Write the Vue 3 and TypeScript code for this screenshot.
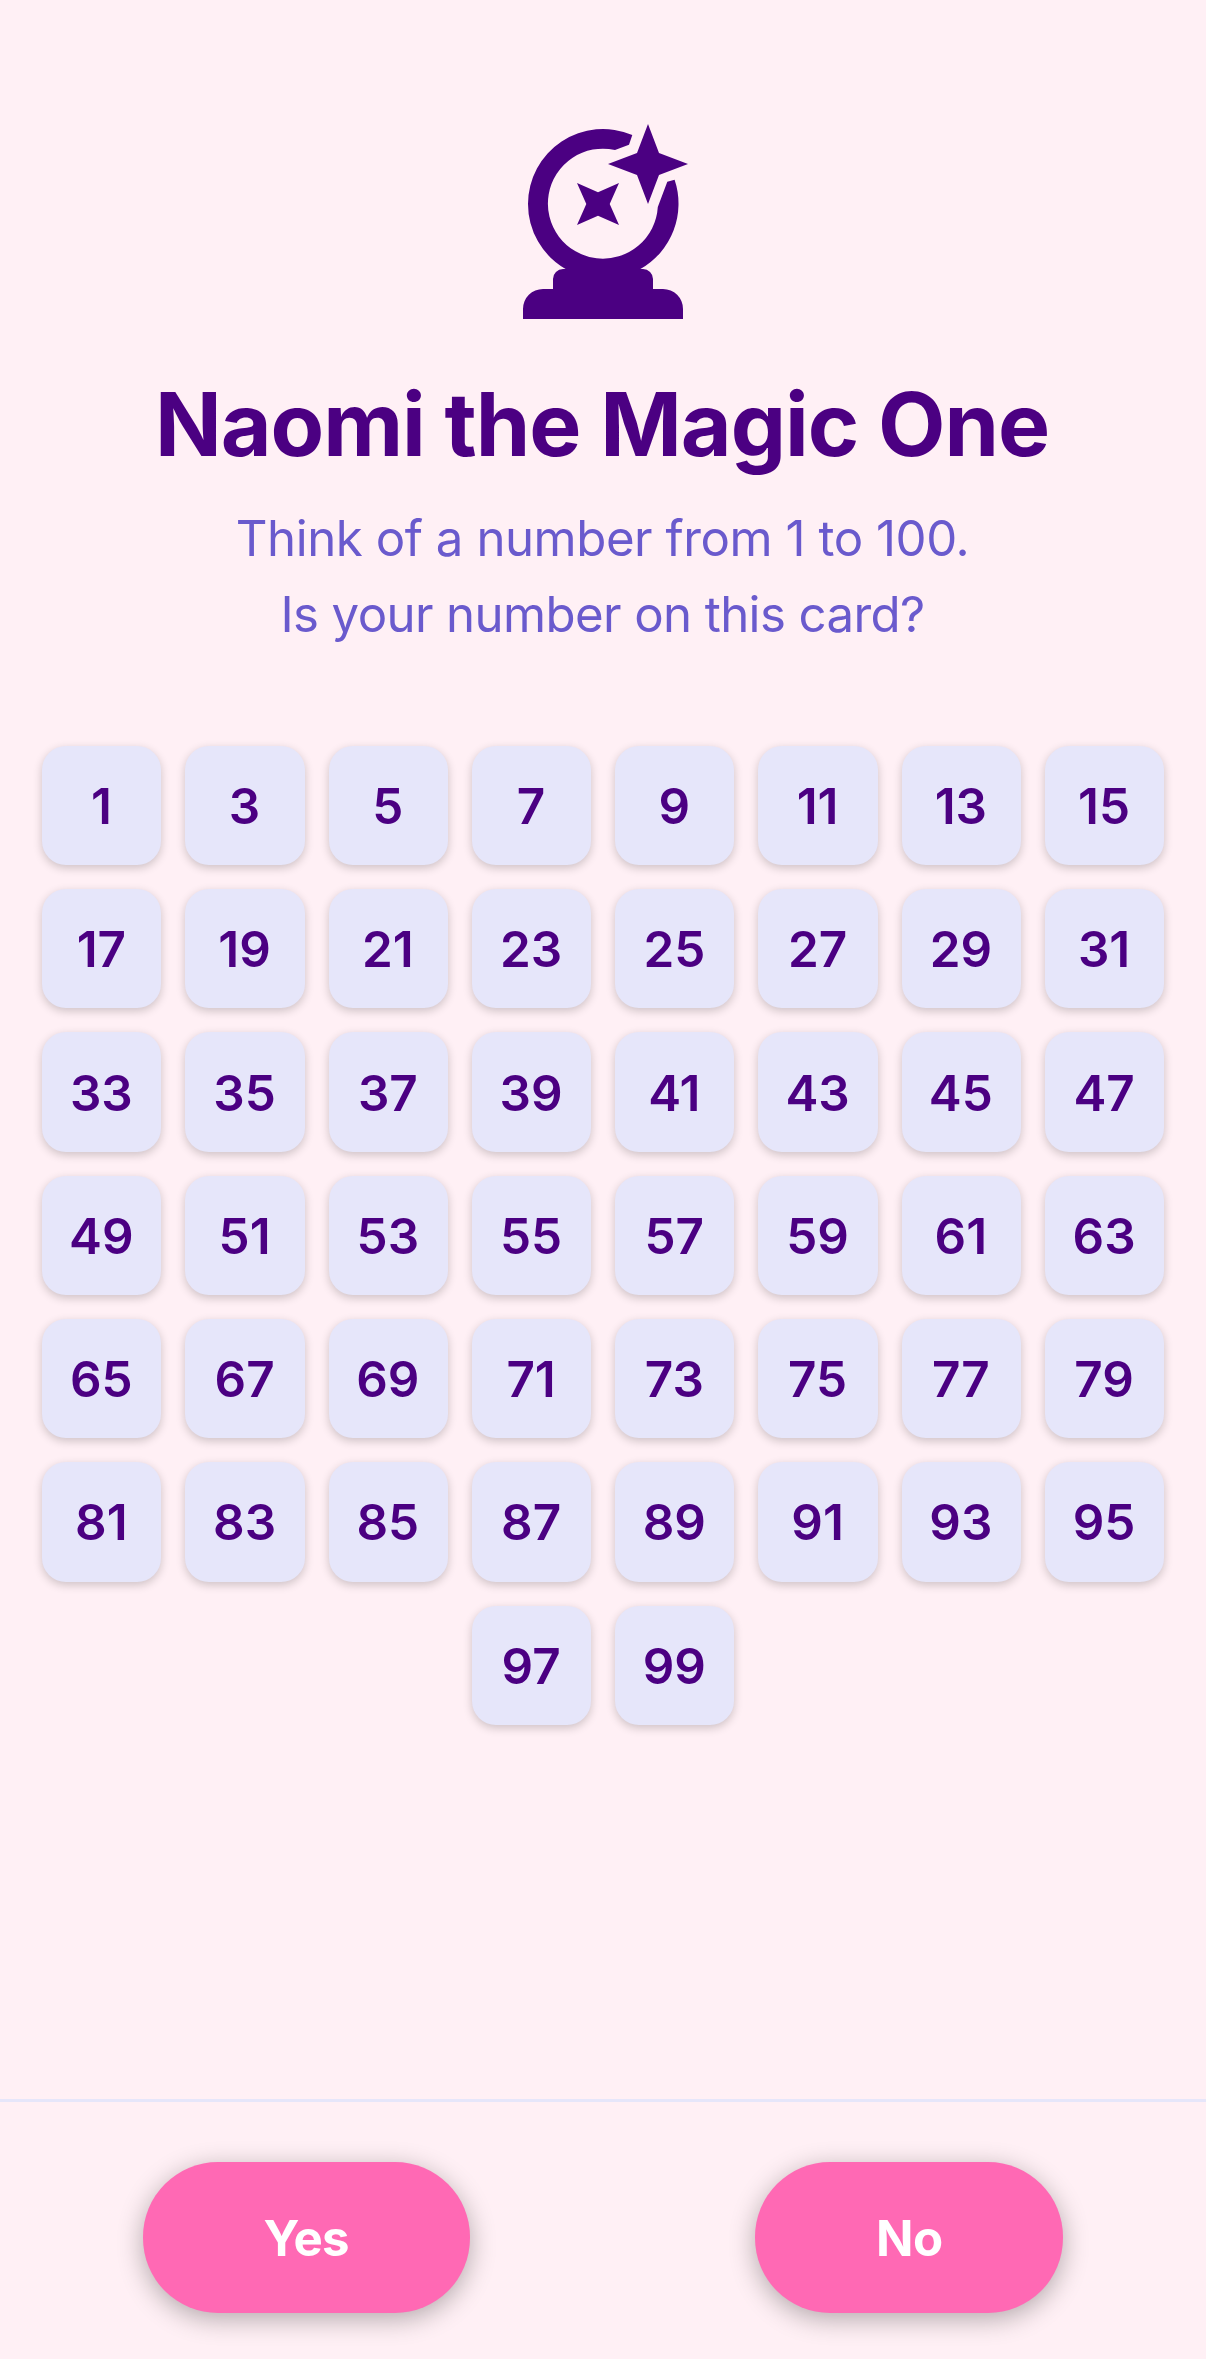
<script setup lang="ts">
const numbers: number[] = Array.from({ length: 50 }, (_, i) => i * 2 + 1)
</script>

<template>
  <div class="screen">
    <main class="content">
      <svg class="ball" viewBox="0 0 24 24" fill="currentColor" aria-hidden="true">
        <path d="M14.93 3.6A7.5 7.5 0 0 0 4.5 10.5A7.5 7.5 0 0 0 8.26 17H8A1 1 0 0 0 7 18V19H6A2 2 0 0 0 4 21V22H20V21A2 2 0 0 0 18 19H17V18A1 1 0 0 0 16 17H15.74A7.5 7.5 0 0 0 19.16 8.08L18.43 8.28L17.48 10.8A5.5 5.5 0 1 1 13.2 5.1L14.6 4.57Z" />
        <path d="M16.5 2.5L17.6 5.4L20.5 6.5L17.6 7.6L16.5 10.5L15.4 7.6L12.5 6.5L15.4 5.4Z" />
        <path d="M9.4 8.4L11.5 9.33L13.6 8.4L12.67 10.5L13.6 12.6L11.5 11.67L9.4 12.6L10.33 10.5Z" />
      </svg>
      <h1 class="title">Naomi the Magic One</h1>
      <p class="prompt first">Think of a number from 1 to 100.</p>
      <p class="prompt second">Is your number on this card?</p>
      <div class="card">
        <div v-for="n in numbers" :key="n" class="tile">{{ n }}</div>
      </div>
    </main>
    <footer class="actions">
      <button class="answer yes" type="button">Yes</button>
      <button class="answer no" type="button">No</button>
    </footer>
  </div>
</template>

<style>
body {
  margin: 0;
  background: #fff0f5;
}
</style>

<style scoped>
.screen {
  box-sizing: border-box;
  width: 1206px;
  height: 2359px;
  display: flex;
  flex-direction: column;
  overflow: hidden;
  background: #fff0f5;
  font-family: Inter, "Liberation Sans", sans-serif;
}
.content {
  flex: 1;
  display: flex;
  flex-direction: column;
  align-items: center;
  padding-top: 99px;
}
.ball {
  display: block;
  width: 240px;
  height: 240px;
  color: #4b0082;
}
.title {
  margin: 31px 0 0;
  padding-right: 2px;
  font-size: 87.6px;
  line-height: 108px;
  font-weight: 700;
  letter-spacing: -1.02px;
  color: #4b0082;
  white-space: nowrap;
}
.prompt {
  margin: 0;
  padding-right: 1px;
  font-size: 49.2px;
  line-height: 76px;
  font-weight: 400;
  color: #6a5acd;
  white-space: nowrap;
}
.first {
  margin-top: 22px;
  letter-spacing: -0.46px;
}
.second {
  letter-spacing: -0.62px;
}
.card {
  display: flex;
  flex-wrap: wrap;
  justify-content: center;
  gap: 24px;
  width: 1122.2px;
  margin-top: 93.7px;
}
.tile {
  box-sizing: border-box;
  width: 119.25px;
  height: 119.33px;
  padding: 1px 0.6px 0 0;
  display: flex;
  align-items: center;
  justify-content: center;
  border-radius: 24px;
  background: #e6e6fa;
  box-shadow: 0 3px 10px rgba(0, 0, 0, 0.2);
  color: #4b0082;
  font-size: 49.4px;
  font-weight: 600;
}
.actions {
  box-sizing: border-box;
  height: 260px;
  display: flex;
  justify-content: space-around;
  align-items: flex-start;
  padding-top: 60px;
  border-top: 3px solid #e6e6fa;
}
.answer {
  height: 151px;
  padding: 0;
  border: 0;
  border-radius: 75px;
  background: #ff69b4;
  box-shadow: 0 6px 26px rgba(0, 0, 0, 0.3);
  color: #fff;
  font-family: inherit;
  font-size: 49.2px;
  font-weight: 700;
  letter-spacing: -0.6px;
}
.yes {
  width: 327px;
}
.no {
  width: 308px;
}
</style>
